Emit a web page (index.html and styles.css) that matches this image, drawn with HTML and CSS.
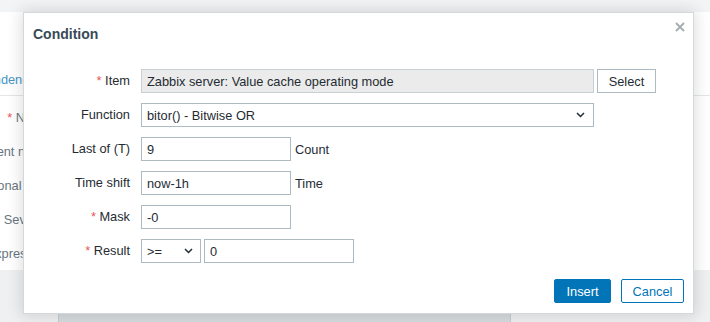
FILE: index.html
```html
<!DOCTYPE html>
<html lang="en">
<head>
  <meta charset="UTF-8">
  <title>Condition</title>
  <link rel="stylesheet" href="styles.css">
</head>
<body>
  <!-- Background page (trigger form), mostly hidden under the dialog -->
  <div class="page">
    <div class="topbar"></div>
    <div class="tabs">
      <div class="bg-label tab-label">Dependencies</div>
    </div>
    <div class="bg-form">
      <div class="bg-label"><span class="req">*</span>&nbsp;Name</div>
      <div class="bg-label">Event name</div>
      <div class="bg-label">Operational data</div>
      <div class="bg-label">Severity</div>
      <div class="bg-label">Expression</div>
    </div>
    <div class="bg-bottom">
      <div class="bg-panel"></div>
    </div>
  </div>

  <!-- Condition dialog -->
  <div class="dialog">
    <div class="dialog-head">
      <h4>Condition</h4>
      <button class="btn-close" title="Close">
        <svg width="10" height="10" viewBox="0 0 10 10"><path d="M1 1L9 9M9 1L1 9" stroke="#a2acb1" stroke-width="1.8" fill="none"/></svg>
      </button>
    </div>

    <div class="form-grid">
      <label class="lbl"><span class="req">*</span> Item</label>
      <div class="field">
        <input class="input input-wide readonly" type="text" value="Zabbix server: Value cache operating mode" readonly>
        <button class="btn-alt">Select</button>
      </div>

      <label class="lbl">Function</label>
      <div class="field">
        <div class="select select-wide">
          <span>bitor() - Bitwise OR</span>
          <svg width="9" height="6" viewBox="0 0 9 6"><path d="M1 1L4.5 4.5L8 1" stroke="#1f2c33" stroke-width="1.5" fill="none"/></svg>
        </div>
      </div>

      <label class="lbl">Last of (T)</label>
      <div class="field">
        <input class="input input-mid" type="text" value="9">
        <span class="hint">Count</span>
      </div>

      <label class="lbl">Time shift</label>
      <div class="field">
        <input class="input input-mid" type="text" value="now-1h">
        <span class="hint">Time</span>
      </div>

      <label class="lbl"><span class="req">*</span> Mask</label>
      <div class="field">
        <input class="input input-mid" type="text" value="-0">
      </div>

      <label class="lbl"><span class="req">*</span> Result</label>
      <div class="field">
        <div class="select select-small">
          <span>&gt;=</span>
          <svg width="9" height="6" viewBox="0 0 9 6"><path d="M1 1L4.5 4.5L8 1" stroke="#1f2c33" stroke-width="1.5" fill="none"/></svg>
        </div>
        <input class="input input-mid" type="text" value="0">
      </div>
    </div>

    <div class="dialog-foot">
      <button class="btn btn-primary">Insert</button>
      <button class="btn btn-secondary">Cancel</button>
    </div>
  </div>
</body>
</html>
```

FILE: styles.css
```css
/* Base */
* { box-sizing: border-box; }
body {
  margin: 0;
  width: 710px;
  height: 322px;
  overflow: hidden;
  background: #ffffff;
  font-family: 'Liberation Sans', Arial, sans-serif;
  font-size: 12.8px;
  color: #1f2c33;
  position: relative;
}

/* Background page */
.page {
  display: flex;
  flex-direction: column;
  height: 322px;
}
.topbar {
  height: 12px;
  background: #f3f4f5;
}
.tabs {
  height: 84px;
  display: flex;
  align-items: flex-end;
  padding-bottom: 8px;
  border-bottom: 1px solid #e3e7ea;
}
.bg-label {
  width: 50px;
  display: flex;
  justify-content: flex-end;
  white-space: nowrap;
  color: #68767f;
  height: 34px;
  align-items: center;
}
.tab-label {
  width: 45px;
  height: auto;
  color: #4796c4;
}
.bg-form {
  padding-top: 4px;
  display: flex;
  flex-direction: column;
}
.req { color: #e45959; }
.bg-bottom {
  flex: 1;
  display: flex;
  align-items: flex-end;
  background: #eef0f1;
}
.bg-panel {
  margin-left: 58px;
  width: 453px;
  height: 12px;
  background: #d6dbde;
  border-left: 1px solid #c6ccd0;
  border-right: 1px solid #c6ccd0;
}

/* Dialog */
.dialog {
  position: absolute;
  top: 12px;
  left: 23px;
  width: 671px;
  height: 302px;
  background: #ffffff;
  border: 1px solid #d3d8db;
  box-shadow: 0 0 14px 2px rgba(0, 0, 0, 0.13);
  display: flex;
  flex-direction: column;
}
.dialog-head {
  padding: 12px 10px 0 9px;
}
.dialog-head h4 {
  margin: 0;
  font-size: 14px;
  line-height: 18px;
  font-weight: bold;
  color: #384a57;
}
.btn-close {
  position: absolute;
  top: 8px;
  right: 7px;
  width: 12px;
  height: 12px;
  padding: 0;
  border: none;
  background: none;
  display: flex;
  align-items: center;
  justify-content: center;
}

/* Form */
.form-grid {
  margin-top: 26px;
  display: grid;
  grid-template-columns: 106px 1fr;
  column-gap: 11px;
  row-gap: 10px;
}
.lbl {
  text-align: right;
  line-height: 24px;
  white-space: nowrap;
}
.field {
  display: flex;
  align-items: center;
  height: 24px;
}
.input {
  height: 24px;
  border: 1px solid #acbbc2;
  padding: 0 5px;
  font-family: inherit;
  font-size: inherit;
  color: #1f2c33;
  background: #ffffff;
  outline: none;
}
.input-wide { width: 453px; }
.input-mid { width: 150px; }
.readonly {
  background: #ebebeb;
  border-color: #c8d0d4;
}
.hint { margin-left: 4px; }
.btn-alt {
  margin-left: 3px;
  width: 59px;
  height: 24px;
  border: 1px solid #acbbc2;
  background: #ffffff;
  font-family: inherit;
  font-size: inherit;
  color: #1f2c33;
  padding: 0;
}
.select {
  height: 24px;
  border: 1px solid #acbbc2;
  display: flex;
  align-items: center;
  justify-content: space-between;
  padding: 0 8px 0 5px;
}
.select-wide { width: 453px; }
.select-small {
  width: 60px;
  margin-right: 3px;
  padding-right: 7px;
}

/* Footer buttons */
.dialog-foot {
  margin-top: auto;
  padding: 0 9px 10px 0;
  display: flex;
  justify-content: flex-end;
  gap: 10px;
}
.btn {
  height: 24px;
  padding: 0;
  border-radius: 2px;
  font-family: inherit;
  font-size: inherit;
  border: 1px solid #0275b8;
}
.btn-primary {
  width: 57px;
  background: #0275b8;
  color: #ffffff;
}
.btn-secondary {
  width: 63px;
  background: #ffffff;
  color: #0275b8;
}
```
